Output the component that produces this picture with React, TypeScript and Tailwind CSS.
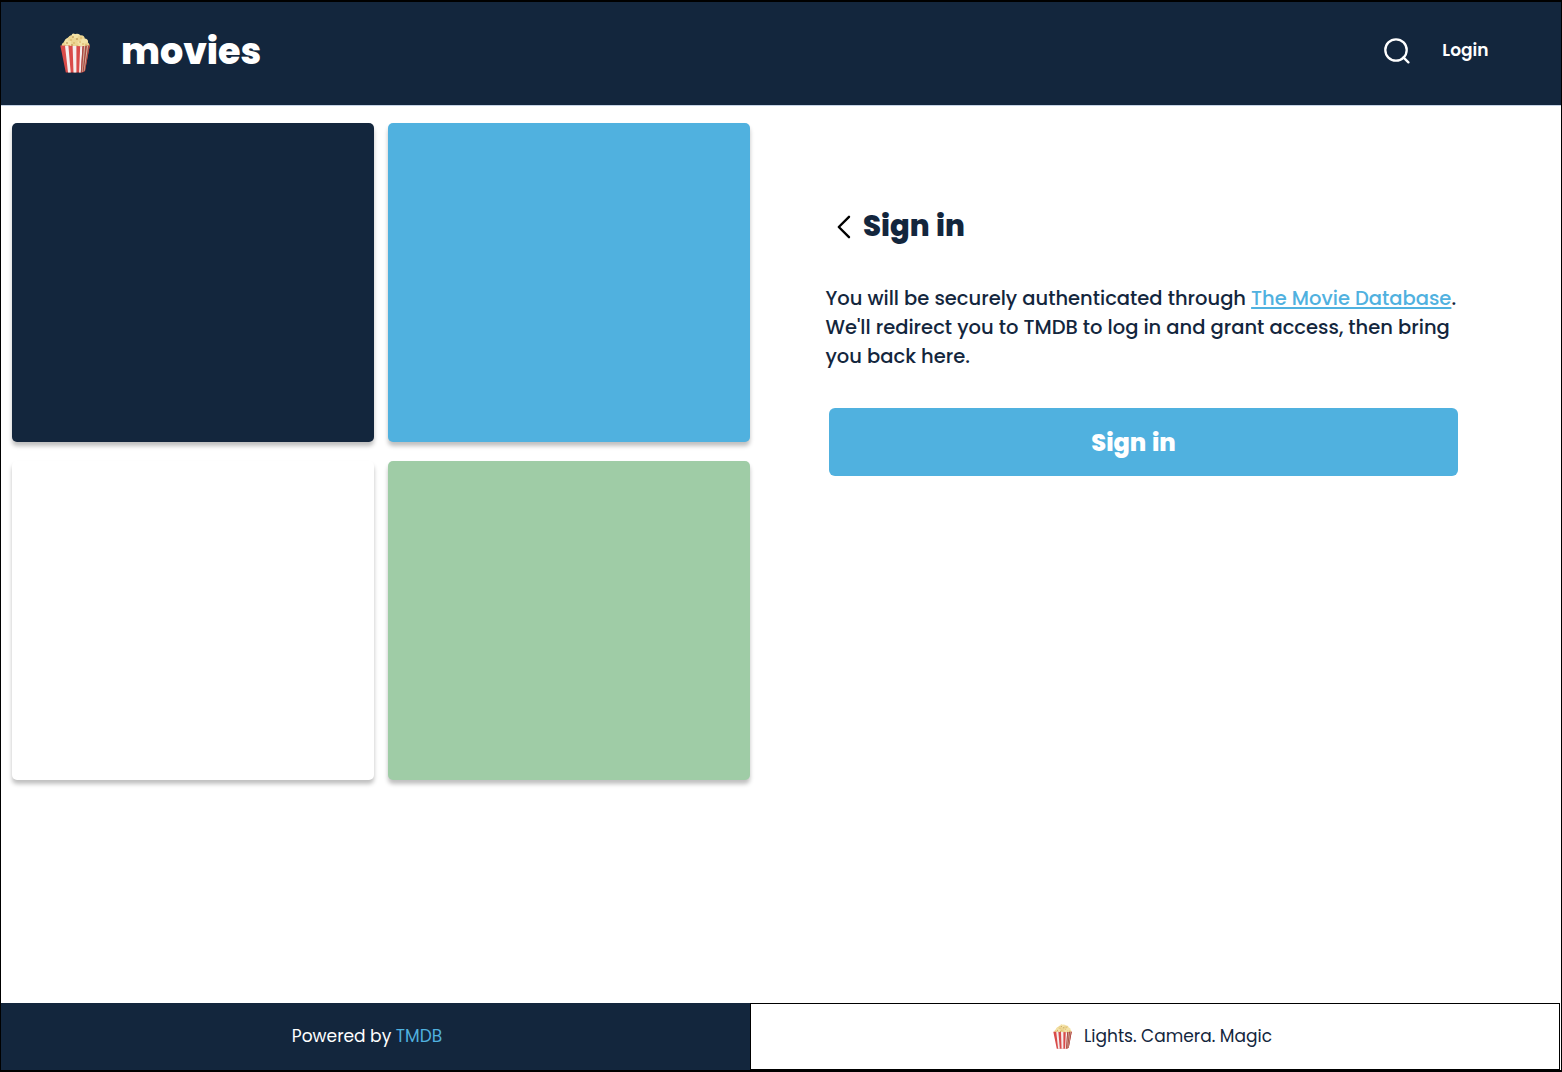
import React from 'react';

const kernels: [number, number, number][] = [
  [5, 13, 3.4], [8.5, 9, 3.8], [12, 6, 3.8], [17, 4.5, 3.8], [21, 6, 3.8], [24.5, 9, 3.6],
  [26.5, 12.5, 3], [10, 12, 4.2], [15.5, 9.5, 4.5], [20.5, 12, 4.2], [15, 13, 4], [13.5, 2.4, 1.9],
];
const specks: [number, number][] = [
  [7, 10], [11, 7], [14, 10], [17, 6], [20, 9], [23, 11], [9, 13], [17, 13], [26, 12], [13, 4], [21, 5], [5, 13], [12, 12],
];

function Popcorn({ className }: { className: string }) {
  return (
    <svg viewBox="0 0 30 40" className={className} aria-hidden="true">
      <path d="M2 14 C4 5 9 3 15 3 C22 3 27 7 28 14Z" fill="#edd48c" />
      {kernels.map(([x, y, r], i) => (
        <circle key={i} cx={x} cy={y} r={r} fill={i % 2 ? '#f3e2a6' : '#ecd592'} />
      ))}
      {specks.map(([x, y], i) => (
        <circle key={i} cx={x} cy={y} r=".75" fill={i % 3 ? '#d2a553' : '#a87535'} />
      ))}
      <path d="M.3 12.5 L22 13.2 L29.8 12.5 L25 38 Q23 39.8 20 39.5 H5.8Z" fill="#d94b49" />
      <path d="M5 12.7 H8.4 L10.7 39.5 H8Z M12.6 12.9 H16.4 L16.4 39.5 H13.5Z M20.2 13.2 H22.5 L20.8 39.5 H19.1Z" fill="#f5eeee" />
      <path d="M22.5 13.2 L29.8 12.5 L25 38 L20.8 39.5Z" fill="#a94a42" />
      <path d="M24 13.1 H25.2 L22.6 39 H22Z M27 12.8 H28.1 L24.4 38 H23.8Z" fill="#d7b8a4" />
    </svg>
  );
}

function Tile({ color }: { color: string }) {
  return <div className={`h-[319px] rounded-[5px] shadow-[0_4px_4px_rgba(0,0,0,0.25)] ${color}`} />;
}

export default function App() {
  return (
    <div className="flex h-[1072px] w-[1562px] flex-col overflow-hidden border-t-2 border-r border-b-2 border-l border-black bg-white font-['Poppins','Inter',sans-serif] text-[#13263d]">
      <header className="flex h-[104px] shrink-0 items-start border-b border-[#c5d3e5] bg-[#13263d] pr-[72px] pl-[59px] text-white">
        <Popcorn className="mt-[30.5px] h-[40px] w-[30px]" />
        <h1 className="mt-[25px] ml-[31px] text-[36.5px] leading-[50px] font-extrabold">movies</h1>
        <svg viewBox="0 0 26 26" className="mt-[36px] ml-auto size-[26px]" fill="none" stroke="currentColor" strokeWidth="2.3" strokeLinecap="round">
          <circle cx="12" cy="12" r="10.7" />
          <path d="M19.4 19.4 L24.4 24.4" />
        </svg>
        <a className="mt-[36px] mr-[0.5px] ml-[32px] text-[17px] leading-[24px] font-semibold">Login</a>
      </header>

      <main className="flex grow">
        <section className="ml-[11px] grid w-[738px] grid-cols-2 content-start gap-x-[14px] gap-y-[19px] pt-[17px]">
          <Tile color="bg-[#13263d]" />
          <Tile color="bg-[#50b1df]" />
          <Tile color="bg-white" />
          <Tile color="bg-[#9fcca6]" />
        </section>
        <section className="ml-[75px] w-[640px] pt-[98px]">
          <div className="flex h-[44px] items-center pl-[12px]">
            <svg viewBox="0 0 14 24" className="mt-px h-[24px] w-[14px]" fill="none" stroke="black" strokeWidth="2.4" strokeLinecap="round" strokeLinejoin="round">
              <path d="M12 1.8 L1.8 12 L12 22.2" />
            </svg>
            <h2 className="-mt-px ml-[12px] text-[29px] leading-[44px] font-extrabold [word-spacing:1px]">Sign in</h2>
          </div>
          <p className="mt-[36px] pl-[0.5px] text-[19.5px] leading-[29px] font-medium whitespace-nowrap">
            <span className="block">
              You will be securely authenticated through{' '}
              <a className="text-[#50b1df] underline decoration-[1.5px] underline-offset-2">The Movie Database</a>.
            </span>
            <span className="block">We'll redirect you to TMDB to log in and grant access, then bring</span>
            <span className="block">you back here.</span>
          </p>
          <button className="mt-[37px] ml-[4px] block h-[68.4px] w-[629px] rounded-[6px] bg-[#50b1df] pt-[1.5px] pr-[20px] text-[24px] font-extrabold text-white [word-spacing:1px]">Sign in</button>
        </section>
      </main>

      <footer className="flex h-[67px] shrink-0 text-[17.05px]">
        <div className="flex w-[749px] items-center justify-center bg-[#13263d] pr-[17px] text-white">
          <span>Powered by <a className="text-[#50b1df]">TMDB</a></span>
        </div>
        <div className="mr-px flex grow items-center justify-center border-t border-r border-b border-l border-black pl-[15px]">
          <Popcorn className="mr-[12px] h-[25px] w-[19px]" />
          <span>Lights. Camera. Magic</span>
        </div>
      </footer>
    </div>
  );
}
